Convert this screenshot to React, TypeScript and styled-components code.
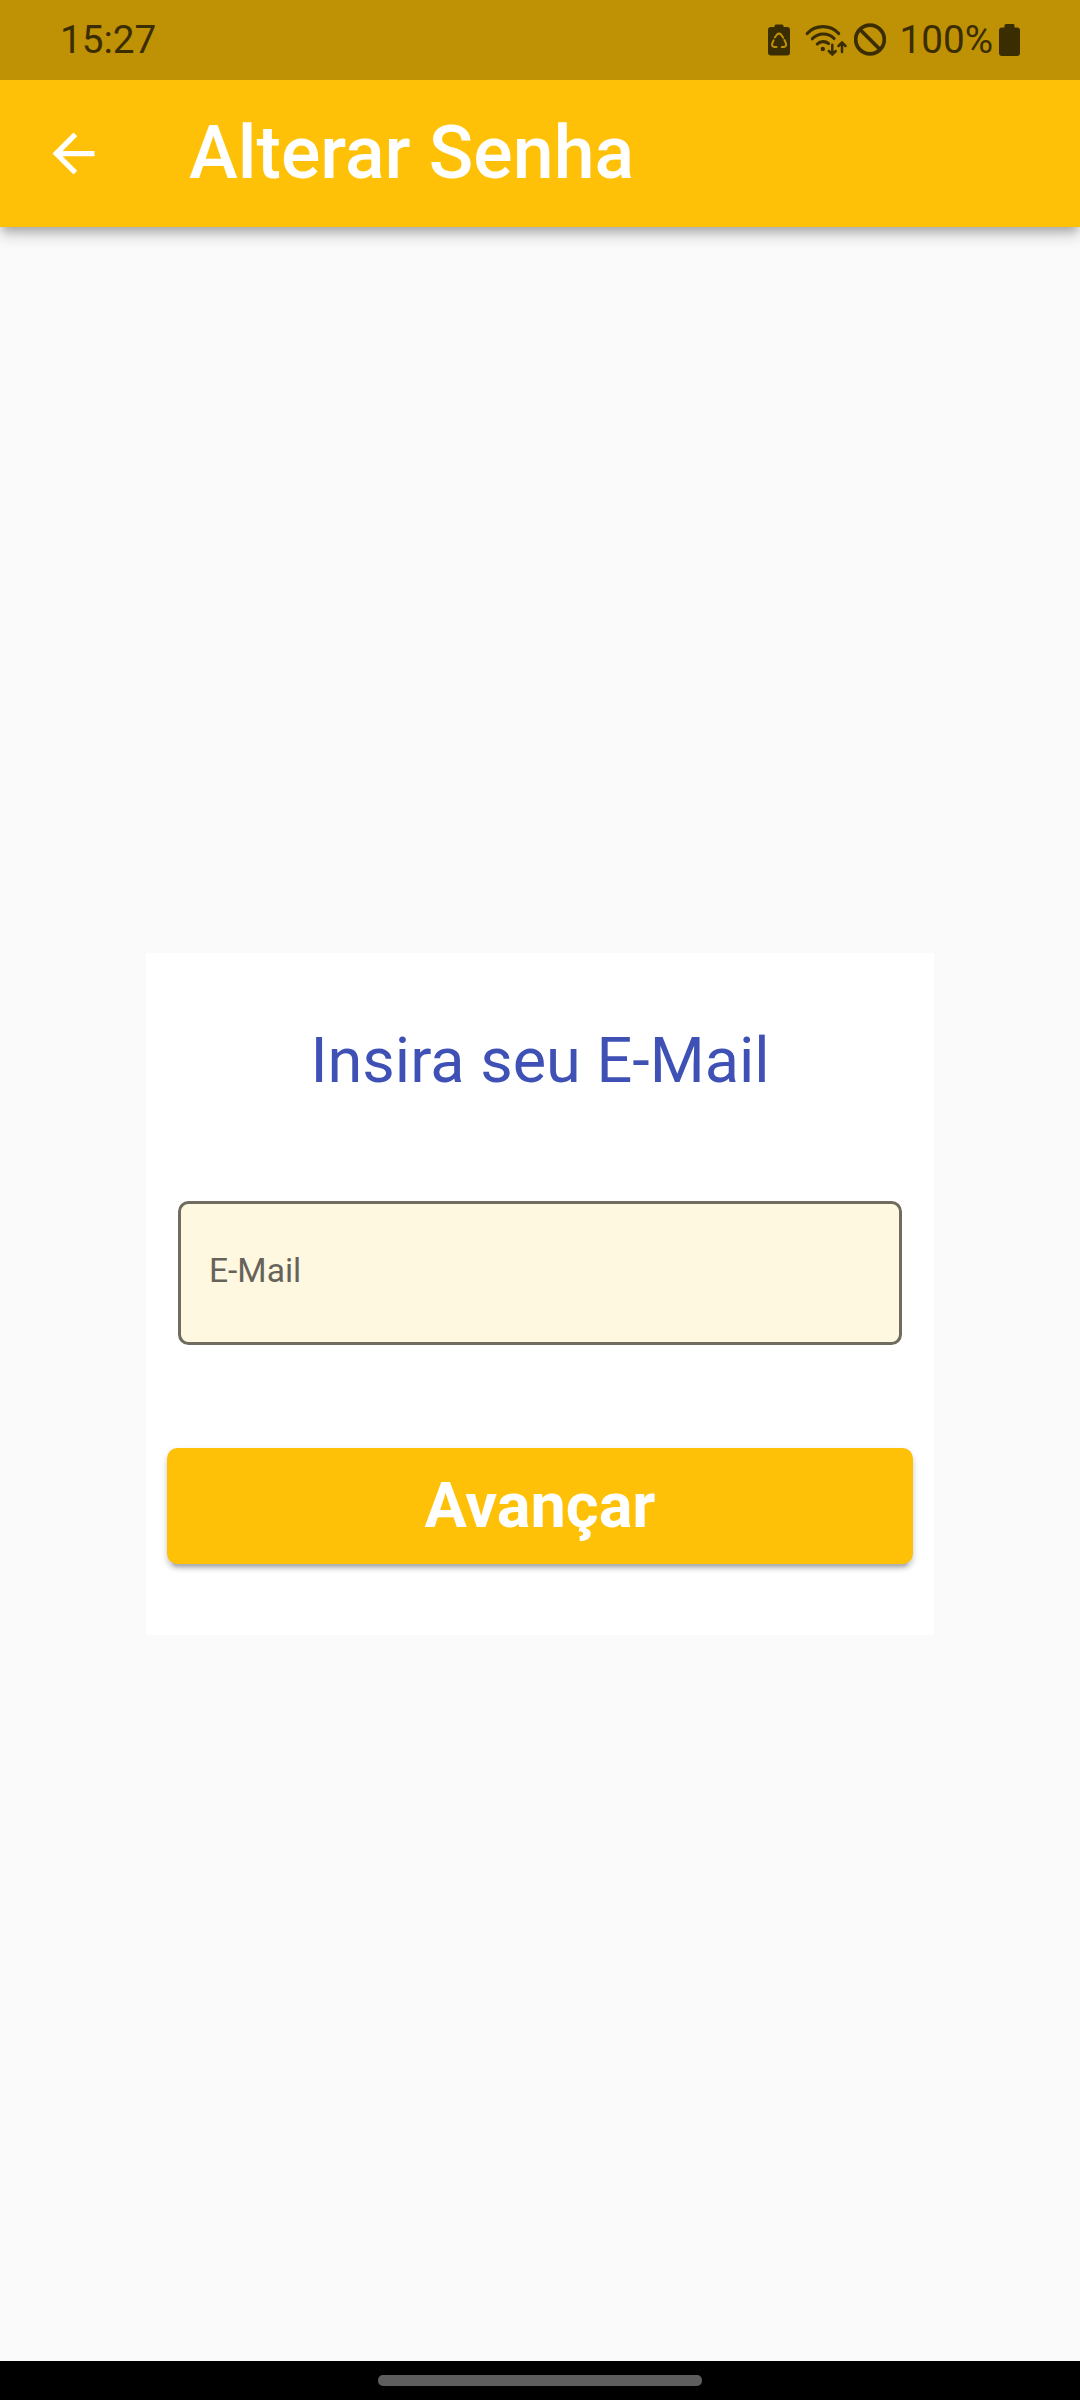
import React from "react";
import styled, { createGlobalStyle } from "styled-components";

const GlobalStyle = createGlobalStyle`
  *, *::before, *::after { box-sizing: border-box; }
  body { margin: 0; background: #fafafa; }
`;

const INK = "#3b2d02";
const AMBER = "#ffc107";

const Screen = styled.div`
  display: flex;
  flex-direction: column;
  width: 1080px;
  height: 2400px;
  background: #fafafa;
  font-family: Roboto, "Noto Sans", sans-serif;
`;

const StatusBar = styled.div`
  display: flex;
  align-items: center;
  justify-content: space-between;
  flex: none;
  height: 80px;
  padding: 0 60px;
  background: #bf9105;
  color: ${INK};
`;

const StatusText = styled.span`
  font-size: 38.7px;
  line-height: 80px;
  height: 80px;
  white-space: nowrap;
`;

const StatusIcons = styled.div`
  display: flex;
  align-items: center;
`;

const StatusGlyph = styled.svg<{ $gap?: number }>`
  display: block;
  flex: none;
  margin-right: ${(p) => p.$gap ?? 0}px;
`;

const AppBar = styled.header`
  display: flex;
  align-items: center;
  flex: none;
  height: 147px;
  padding-left: 42px;
  gap: 84px;
  background: ${AMBER};
  box-shadow: 0 7px 8px -3px rgba(0, 0, 0, 0.2), 0 10px 13px 0 rgba(0, 0, 0, 0.12), 0 3px 20px 0 rgba(0, 0, 0, 0.06);
  clip-path: inset(0 0 -60px 0);
`;

const BackButton = styled.button`
  display: flex;
  padding: 0;
  border: 0;
  background: none;
`;

const Title = styled.h1`
  margin: 0;
  padding-bottom: 2px;
  color: #fff;
  font-size: 73.5px;
  font-weight: 500;
  line-height: 86px;
  white-space: nowrap;
`;

const Body = styled.main`
  display: flex;
  flex: 1;
  align-items: center;
  justify-content: center;
`;

const Card = styled.form`
  display: flex;
  flex-direction: column;
  width: 788px;
  height: 682px;
  padding: 71px 21px 0;
  background: #fff;
`;

const Heading = styled.h2`
  margin: 0;
  color: #3f51b5;
  font-size: 63px;
  font-weight: 400;
  line-height: 74px;
  text-align: center;
`;

const Field = styled.label`
  display: flex;
  align-items: center;
  height: 144px;
  margin: 103px 11px 0;
  padding: 0 28px 4px;
  border: 3px solid #706c60;
  border-radius: 10.5px;
  background: #fff8e1;
`;

const FieldLabel = styled.span`
  color: #66635a;
  font-size: 33.6px;
  line-height: 40px;
`;

const SubmitButton = styled.button`
  height: 116px;
  margin: 103px 0 0;
  padding: 0;
  border: 0;
  border-radius: 10.5px;
  background: ${AMBER};
  color: #fff;
  font-family: inherit;
  font-size: 63px;
  font-weight: 700;
  line-height: 74px;
  box-shadow: 0 8px 3px -5px rgba(0, 0, 0, 0.16), 0 5px 5px 0 rgba(0, 0, 0, 0.13), 0 3px 8px 0 rgba(0, 0, 0, 0.1);
`;

const NavigationBar = styled.footer`
  display: flex;
  justify-content: center;
  flex: none;
  height: 39px;
  padding-top: 14px;
  background: #000;
`;

const GestureHandle = styled.div`
  width: 324px;
  height: 11px;
  border-radius: 5px;
  background: #5e5e5e;
`;

const BatterySaverIcon = () => (
  <StatusGlyph $gap={14} width="24" height="34" viewBox="767 22.500 24 34">
    <path d="M774.5 26.500V25.500a1.500 1.500 0 0 1 1.500-1.500h6a1.500 1.500 0 0 1 1.500 1.500v1h3.500a3 3 0 0 1 3 3V52a3 3 0 0 1-3 3h-16a3 3 0 0 1-3-3V29.500a3 3 0 0 1 3-3z" fill={INK} />
    <g fill="none" stroke="#bf9105" strokeWidth="2" strokeLinecap="round" strokeLinejoin="round">
      <path d="M774.800 37l2.200-3q2-1.800 4 0l2.200 3.200" />
      <path d="M784.400 39.500l1.600 3.400q.8 3-2 3.600h-2.200" />
      <path d="M776.500 46.500h-2.300q-2.800-.6-2-3.600l1.400-3" />
    </g>
    <path d="M779 36l3.800 5h-1.500l2.500 3.500h-3.800v2.500h-2v-2.500h-3.800l2.500-3.500h-1.500z" fill={INK} />
  </StatusGlyph>
);

const WifiIcon = () => (
  <StatusGlyph $gap={6} width="43" height="34" viewBox="805 22 43 34">
    <g fill="none" stroke={INK} strokeWidth="3.100" strokeLinecap="round">
      <path d="M807.200 32.500a21.500 21.500 0 0 1 31.500 0" />
      <path d="M812.300 37.800a15 15 0 0 1 21.800 -.3" />
      <path d="M817.300 43a8.500 8.500 0 0 1 11.300-.4" />
      <path d="M832.300 43.800v9.500M828.800 50l3.500 3.500 3.500-3.500" strokeWidth="2.500" />
      <path d="M842 51v-9.500M838.500 45l3.500-3.500 3.500 3.500" strokeWidth="2.500" />
    </g>
    <circle cx="822.800" cy="48" r="2.200" fill={INK} />
  </StatusGlyph>
);

const BlockedIcon = () => (
  <StatusGlyph $gap={13} width="32" height="34" viewBox="854 22 32 34">
    <circle cx="870" cy="38.500" r="14.300" fill="none" stroke={INK} strokeWidth="3.700" />
    <path d="M860 28.500l20 20" stroke={INK} strokeWidth="3.700" />
  </StatusGlyph>
);

const BatteryIcon = () => (
  <StatusGlyph width="21" height="34" viewBox="999 22.500 21 34">
    <path d="M1004.500 27v-2a1.500 1.500 0 0 1 1.500-1.500h7a1.500 1.500 0 0 1 1.500 1.500v2h2.500a3 3 0 0 1 3 3v22.500a3 3 0 0 1-3 3h-15a3 3 0 0 1-3-3V30a3 3 0 0 1 3-3z" fill={INK} />
  </StatusGlyph>
);

const BatteryLevel = styled(StatusText)`
  margin-right: 6px;
`;

export default function App() {
  return (
    <Screen>
      <GlobalStyle />
      <StatusBar>
        <StatusText>15:27</StatusText>
        <StatusIcons>
          <BatterySaverIcon />
          <WifiIcon />
          <BlockedIcon />
          <BatteryLevel>100%</BatteryLevel>
          <BatteryIcon />
        </StatusIcons>
      </StatusBar>
      <AppBar>
        <BackButton type="button" aria-label="Voltar">
          <svg width="63" height="63" viewBox="0 0 24 24" fill="#fff">
            <path d="M20 11H7.830l5.590-5.590L12 4l-8 8 8 8 1.410-1.410L7.830 13H20v-2z" />
          </svg>
        </BackButton>
        <Title>Alterar Senha</Title>
      </AppBar>
      <Body>
        <Card>
          <Heading>Insira seu E-Mail</Heading>
          <Field>
            <FieldLabel>E-Mail</FieldLabel>
          </Field>
          <SubmitButton type="button">Avançar</SubmitButton>
        </Card>
      </Body>
      <NavigationBar>
        <GestureHandle />
      </NavigationBar>
    </Screen>
  );
}
